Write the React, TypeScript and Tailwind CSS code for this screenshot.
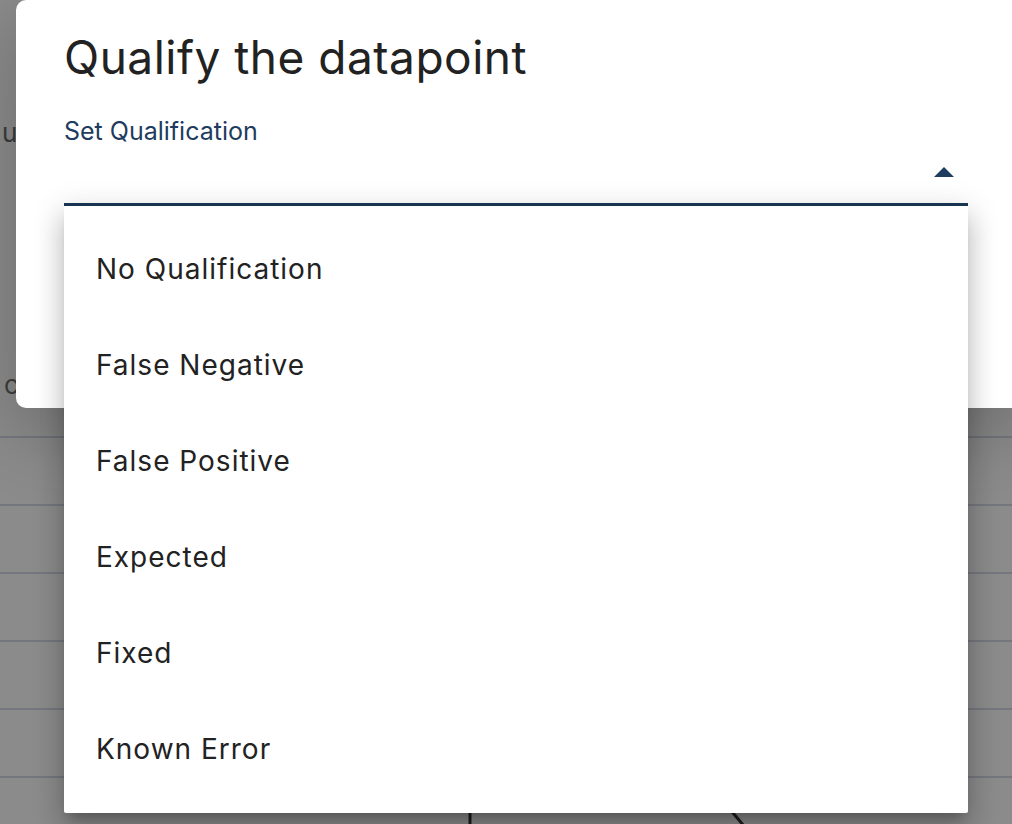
const options = [
  "No Qualification",
  "False Negative",
  "False Positive",
  "Expected",
  "Fixed",
  "Known Error",
];

const font = "font-['Inter','Noto_Sans',sans-serif]";

export default function App() {
  return (
    <div className={`relative h-[824px] w-[1012px] overflow-hidden bg-[#8b8b8b] ${font}`}>
      {/* page behind the dialog, dimmed */}
      <div className="flex flex-col">
        <div className="pl-[2px] pt-[118px] text-[26px] leading-[30px] text-[#3a3a3a]">u</div>
        <div className="pl-[4px] pt-[222px] text-[26px] leading-[30px] text-[#3e3e3e]">c</div>
        <div className="flex flex-col">
          <div className="h-[38px] border-b-2 border-[#74787e]" />
          {[0, 1, 2, 3, 4].map((i) => (
            <div key={i} className="h-[68px] border-b-2 border-[#74787e]" />
          ))}
        </div>
        <svg viewBox="0 0 1012 46" className="h-[46px] w-[1012px]" aria-hidden="true">
          <line x1="470" y1="0" x2="470" y2="46" stroke="#1e1e1e" strokeWidth="3" />
          <line x1="712" y1="10" x2="744" y2="48" stroke="#1e1e1e" strokeWidth="3" />
        </svg>
      </div>

      {/* dialog */}
      <div className="absolute left-[16px] right-[-10px] top-0 h-[408px] rounded-[10px] bg-white px-[48px] shadow-[0_22px_70px_6px_rgba(0,0,0,0.2)]">
        <h2 className="pt-[29px] text-[46px] leading-[56px] font-normal tracking-[0.5px] text-[#222222]">
          Qualify the datapoint
        </h2>
        <div className="mt-[31px] text-[25px] leading-[30px] text-[#1f3c5e]">Set Qualification</div>
        <div className="mr-[6px] mt-[16px] flex h-[44px] items-start justify-end border-b-[3px] border-[#1c3856]">
          <svg viewBox="0 0 20 10" className="mr-[14px] mt-[5px] h-[10px] w-[20px]" aria-hidden="true">
            <path d="M0 10 L10 0 L20 10 Z" fill="#1f3d5e" />
          </svg>
        </div>
      </div>

      {/* open select menu */}
      <ul className="absolute left-[64px] top-[206px] w-[904px] rounded-[2px] bg-white pb-[16px] pt-[15px] shadow-[0_10px_10px_-6px_rgba(0,0,0,0.2),0_16px_24px_2px_rgba(0,0,0,0.14),0_6px_30px_5px_rgba(0,0,0,0.12)]">
        {options.map((o) => (
          <li
            key={o}
            className="flex h-[96px] items-center px-[32px] text-[28px] tracking-[1px] text-[#222222]"
          >
            {o}
          </li>
        ))}
      </ul>
    </div>
  );
}
